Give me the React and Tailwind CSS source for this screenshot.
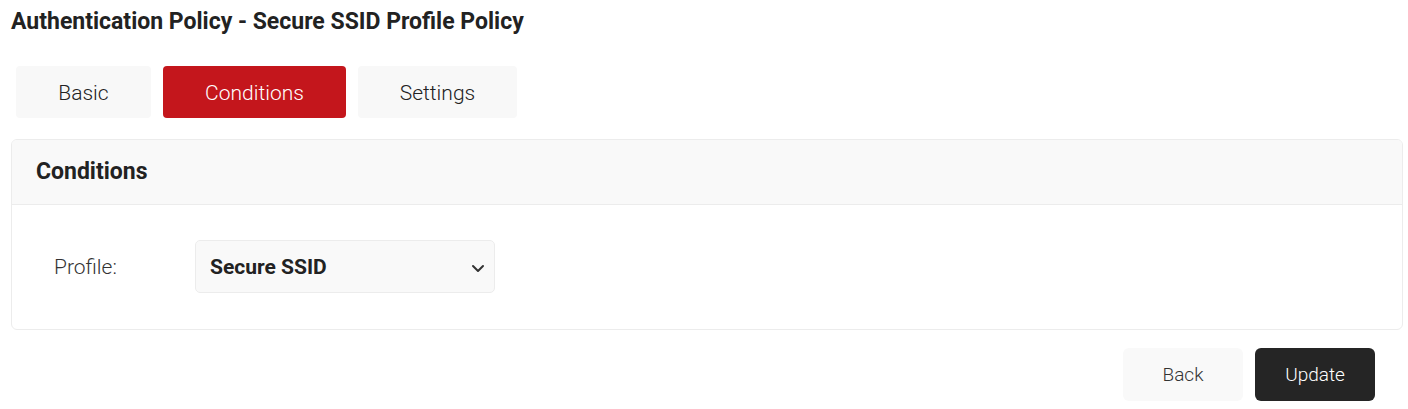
import React from 'react';

const tabs = [
  { label: 'Basic', w: 'w-[135px]' },
  { label: 'Conditions', w: 'w-[183px]', active: true },
  { label: 'Settings', w: 'w-[159px]' },
];

const App = () => {
  return (
    <div className="min-h-screen bg-white pl-[11px] pr-[5px] pt-[8px] text-[#222] font-['Roboto',sans-serif]">
      <h1 className="text-[23px] leading-[28px] font-bold text-[#222]">
        Authentication Policy - Secure SSID Profile Policy
      </h1>

      <div className="mt-[30px] ml-[5px] flex gap-3">
        {tabs.map((t) => (
          <button
            key={t.label}
            className={`${t.w} h-[52px] pt-[3px] rounded-[4px] text-[21px] font-light ${
              t.active ? 'bg-[#c4161c] text-white' : 'bg-[#f8f8f8] text-[#222]'
            }`}
          >
            {t.label}
          </button>
        ))}
      </div>

      <div className="mt-[21px] rounded-[6px] border border-[#ececec] overflow-hidden">
        <div className="h-[65px] bg-[#f9f9f9] border-b border-[#ececec] flex items-center px-6">
          <h2 className="text-[23px] font-bold text-[#222]">Conditions</h2>
        </div>
        <div className="flex items-center pl-[42px] pt-[35px] pb-[36px]">
          <label className="w-[141px] pt-[2px] text-[21px] font-light text-[#333]">Profile:</label>
          <div className="w-[300px] h-[53px] pt-[2px] rounded-[5px] border border-[#ececec] bg-[#f9f9f9] flex items-center justify-between pl-[14px] pr-[8px]">
            <span className="text-[21px] font-bold text-[#222]">Secure SSID</span>
            <svg width="16" height="16" viewBox="0 0 16 16" fill="none" stroke="#333" strokeWidth="2" strokeLinecap="round" strokeLinejoin="round">
              <path d="M3 6l5 5 5-5" />
            </svg>
          </div>
        </div>
      </div>

      <div className="mt-[18px] flex justify-end gap-3 pr-[28px]">
        <button className="w-[120px] h-[53px] pt-[2px] rounded-[6px] bg-[#f9f9f9] text-[19px] font-light text-[#333]">
          Back
        </button>
        <button className="w-[120px] h-[53px] pt-[2px] rounded-[6px] bg-[#252525] text-[19px] font-light text-white">
          Update
        </button>
      </div>
    </div>
  );
};

export default App;
